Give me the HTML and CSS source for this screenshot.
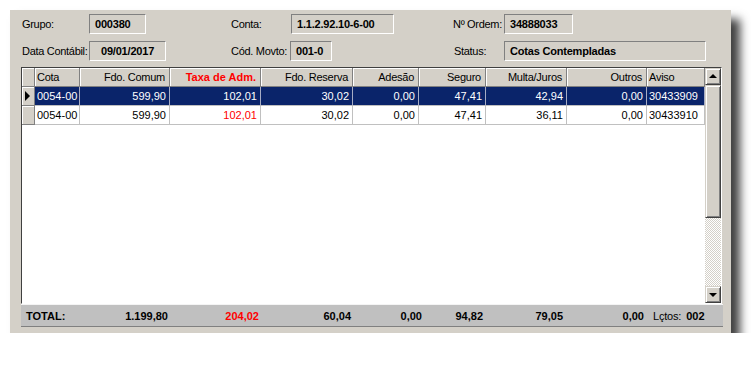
FILE: index.html
```html
<!DOCTYPE html>
<html lang="pt">
<head>
	<meta charset="UTF-8">
	<title>Lançamentos</title>
	<link rel="stylesheet" href="styles.css">
</head>
<body>
	<div class="window">
		<div class="info">
			<span class="lbl">Grupo:</span><span class="fld w-grupo">000380</span>
			<span class="lbl">Conta:</span><span class="fld w-conta">1.1.2.92.10-6-00</span>
			<span class="lbl">Nº Ordem:</span><span class="fld w-ordem">34888033</span>
			<span class="lbl">Data Contábil:</span><span class="fld w-data">09/01/2017</span>
			<span class="lbl">Cód. Movto:</span><span class="fld w-movto">001-0</span>
			<span class="lbl lbl-status">Status:</span><span class="fld w-status">Cotas Contempladas</span>
		</div>

		<div class="grid">
			<div class="cols">
				<div class="row head">
					<div class="ind"></div>
					<div class="c l">Cota</div>
					<div class="c">Fdo. Comum</div>
					<div class="c red b">Taxa de Adm.</div>
					<div class="c">Fdo. Reserva</div>
					<div class="c">Adesão</div>
					<div class="c">Seguro</div>
					<div class="c">Multa/Juros</div>
					<div class="c">Outros</div>
					<div class="c l">Aviso</div>
				</div>
				<div class="row sel">
					<div class="ind"><span class="mark"></span></div>
					<div class="c l">0054-00</div>
					<div class="c">599,90</div>
					<div class="c red">102,01</div>
					<div class="c">30,02</div>
					<div class="c">0,00</div>
					<div class="c">47,41</div>
					<div class="c">42,94</div>
					<div class="c">0,00</div>
					<div class="c l">30433909</div>
				</div>
				<div class="row">
					<div class="ind"></div>
					<div class="c l">0054-00</div>
					<div class="c">599,90</div>
					<div class="c red">102,01</div>
					<div class="c">30,02</div>
					<div class="c">0,00</div>
					<div class="c">47,41</div>
					<div class="c">36,11</div>
					<div class="c">0,00</div>
					<div class="c l">30433910</div>
				</div>
			</div>
			<div class="vscroll">
				<div class="sbtn up"><span class="arrow"></span></div>
				<div class="thumb"></div>
				<div class="track"></div>
				<div class="sbtn down"><span class="arrow"></span></div>
			</div>
		</div>

		<div class="totals">
			<span class="t-lbl">TOTAL:</span>
			<span>1.199,80</span>
			<span class="red">204,02</span>
			<span>60,04</span>
			<span>0,00</span>
			<span>94,82</span>
			<span>79,05</span>
			<span>0,00</span>
			<span class="t-lctos"><em>Lçtos:</em> 002</span>
		</div>
	</div>
</body>
</html>
```

FILE: styles.css
```css
*{
	margin: 0;
	padding: 0;
	box-sizing: border-box;
}
body{
	background: #fff;
	font-family: "Liberation Sans", Arial, sans-serif;
	font-size: 11px;
	color: #000;
}
.window{
	width: 721px;
	height: 323px;
	margin: 10px 0 0 10px;
	padding: 4px 9px 6px 11px;
	background: #d4d0c8;
	box-shadow: 9px 9px 9px rgba(0,0,0,0.75);
}

/* cabeçalho */
.info{
	display: grid;
	grid-template-columns: 68px 141px 60px 162px 52px 1fr;
	grid-auto-rows: 20px;
	row-gap: 7px;
	align-items: center;
}
.lbl{
	padding-left: 1px;
	letter-spacing: -0.3px;
	white-space: nowrap;
}
.lbl-status{
	padding-left: 2px;
}
.fld{
	height: 20px;
	line-height: 18px;
	padding-left: 5px;
	font-weight: bold;
	letter-spacing: -0.2px;
	border: 1px solid;
	border-color: #808080 #fff #fff #808080;
	white-space: nowrap;
}
.w-grupo{ width: 57px; }
.w-data{ width: 77px; padding-left: 11px; }
.w-conta{ width: 103px; margin-left: 1px; }
.w-movto{ width: 42px; }
.w-ordem{ width: 69px; }
.w-status{ width: 202px; }

/* grade */
.grid{
	display: flex;
	height: 237px;
	margin-top: 6px;
	border: 1px solid;
	border-color: #404040 #fff #fff #404040;
}
.cols{
	flex: 1;
	background: #fff;
}
.row{
	display: grid;
	grid-template-columns: 13px 45px 90px 91px 92px 66px 67px 81px 80px 58px;
	height: 19px;
}
.row > div{
	border-right: 1px solid #c0c0c0;
	border-bottom: 1px solid #c0c0c0;
	line-height: 18px;
	white-space: nowrap;
	overflow: hidden;
}
.c{
	text-align: right;
	padding-right: 3px;
}
.c.l{
	text-align: left;
	padding-left: 2px;
}
.row > .ind,
.head > div{
	background: #d4d0c8;
	border-right-color: #808080;
	border-bottom-color: #808080;
	box-shadow: inset 1px 1px #fff;
}
.head .c{
	padding-right: 4px;
	letter-spacing: -0.25px;
}
.b{
	font-weight: bold;
	letter-spacing: 0 !important;
}
.red{
	color: #f00;
}
.sel .c{
	background: #0a246a;
	color: #fff;
	border-right-color: #a6acc4;
}
.ind{
	position: relative;
}
.mark{
	position: absolute;
	left: 3px;
	top: 4px;
	border-left: 5px solid #000;
	border-top: 5px solid transparent;
	border-bottom: 5px solid transparent;
}

/* barra de rolagem */
.vscroll{
	width: 17px;
	display: flex;
	flex-direction: column;
}
.sbtn,
.thumb{
	background: #d4d0c8;
	border: 1px solid;
	border-color: #d4d0c8 #404040 #404040 #d4d0c8;
	box-shadow: inset 1px 1px #fff, inset -1px -1px #808080;
}
.sbtn{
	height: 17px;
	display: flex;
	align-items: center;
	justify-content: center;
}
.thumb{
	height: 133px;
}
.track{
	flex: 1;
	background: repeating-conic-gradient(#d4d0c8 0 25%, #fff 0 50%) 0 0/2px 2px;
}
.arrow{
	border-left: 4px solid transparent;
	border-right: 4px solid transparent;
}
.up .arrow{
	border-bottom: 4px solid #000;
	margin-top: -1px;
}
.down .arrow{
	border-top: 4px solid #000;
	margin-top: 1px;
}

/* totais */
.totals{
	display: grid;
	grid-template-columns: 59px 88px 91px 92px 71px 61px 80px 81px 1fr;
	align-items: center;
	height: 23px;
	width: 702px;
	background: #c0c0c0;
	border-top: 1px solid #f4f4f4;
	border-bottom: 1px solid #808080;
	font-weight: bold;
	white-space: nowrap;
}
.totals span{
	text-align: right;
}
.totals .t-lbl{
	text-align: left;
	padding-left: 5px;
}
.totals .t-lctos{
	text-align: left;
	padding-left: 9px;
}
.t-lctos em{
	font-style: normal;
	font-weight: normal;
	letter-spacing: -0.2px;
	margin-right: 2px;
}
```
